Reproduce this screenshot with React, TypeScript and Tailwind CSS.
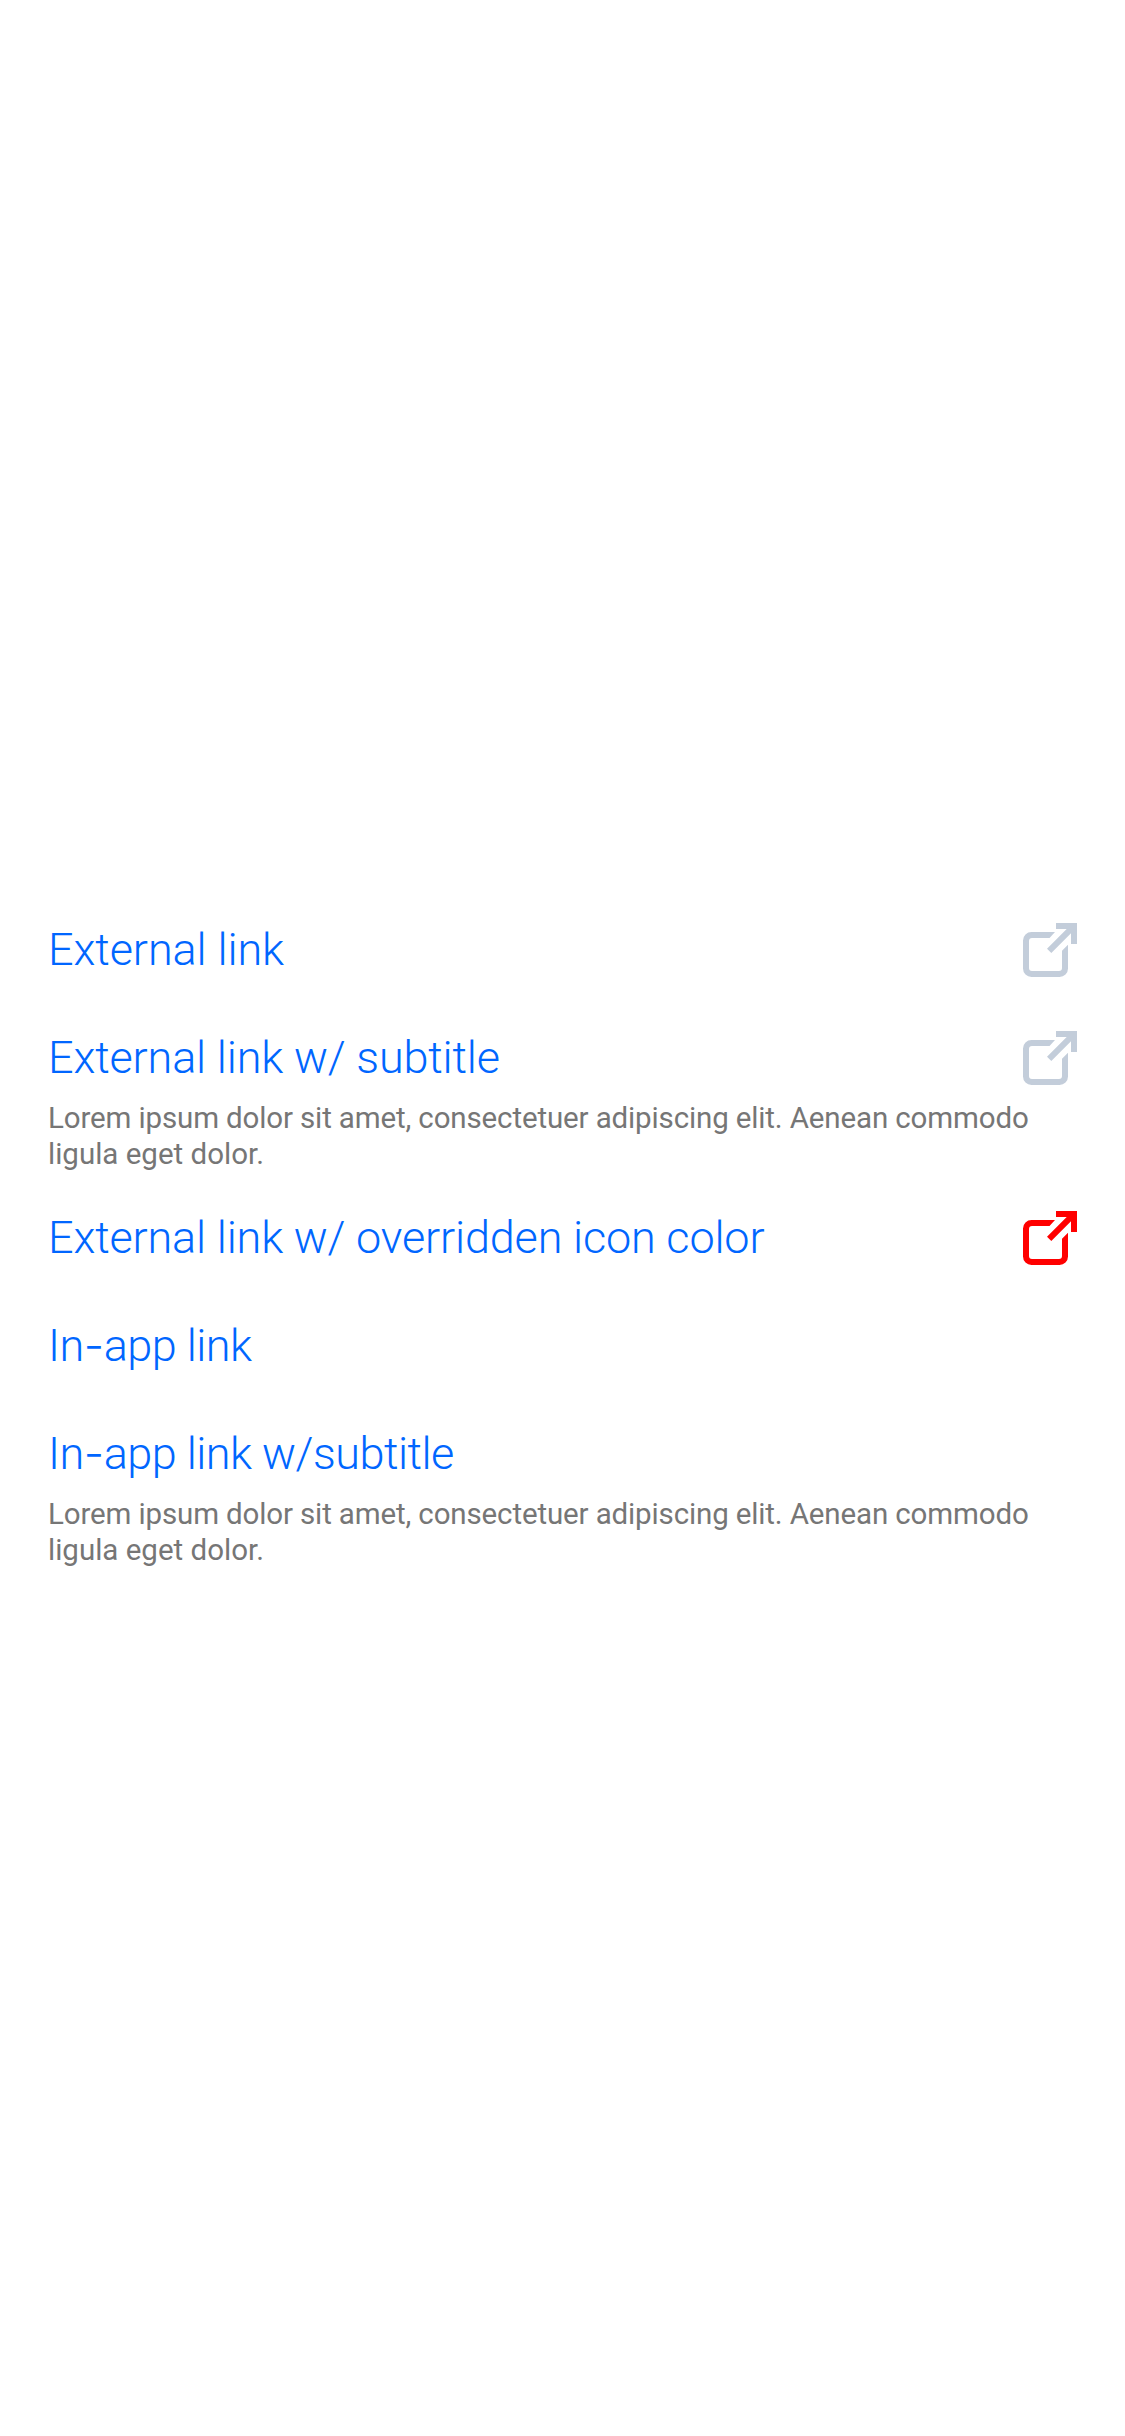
import type { ReactNode } from "react";

function ExternalIcon({ color }: { color: string }) {
  return (
    <svg className={`size-[54px] shrink-0 ${color}`} viewBox="0 0 54 54" fill="currentColor" aria-hidden="true">
      <path d="M32 9H8.5A8.500 8.500 0 0 0 0 17.500V45.500A8.500 8.500 0 0 0 8.500 54H36.500A8.500 8.500 0 0 0 45 45.500V21.800L39 27.800V45A3 3 0 0 1 36 48H9A3 3 0 0 1 6 45V18A3 3 0 0 1 9 15H26.500Z" />
      <path d="M33 0H54V21H48V10.300L28.300 30L24 25.700L43.700 6H33Z" />
    </svg>
  );
}

type LinkRowProps = {
  title: ReactNode;
  tracking: string;
  iconColor?: string;
  subtitle?: ReactNode;
};

function LinkRow({ title, tracking, iconColor, subtitle }: LinkRowProps) {
  return (
    <li className={subtitle ? "pt-6 pb-3" : "py-6"}>
      <div className="flex h-[60px] items-center justify-between">
        <a className={`text-[45px] leading-[60px] font-light whitespace-nowrap text-[#0066ff] ${tracking}`}>{title}</a>
        {iconColor && <ExternalIcon color={iconColor} />}
      </div>
      {subtitle && <p className="mt-3 text-[29.5px] leading-9 text-[#767676]">{subtitle}</p>}
    </li>
  );
}

const lorem = (
  <>
    <span className="tracking-[-0.135px]">Lorem ipsum dolor sit amet, consectetuer adipiscing elit. Aenean commodo</span>{" "}
    ligula eget dolor.
  </>
);

const hyphen = <span className="font-['Inter',sans-serif] leading-none">-</span>;

export default function App() {
  return (
    <main className="min-h-screen bg-white px-12 pt-[896px] font-['Roboto',sans-serif]">
      <ul>
        <LinkRow title="External link" tracking="tracking-[-0.1px]" iconColor="text-[#c3cdda]" />
        <LinkRow title="External link w/ subtitle" tracking="tracking-[-0.17px]" iconColor="text-[#c3cdda]" subtitle={lorem} />
        <LinkRow title="External link w/ overridden icon color" tracking="tracking-[-0.18px]" iconColor="text-[#ff0000]" />
        <LinkRow title={<>In{hyphen}app link</>} tracking="tracking-[-0.5px]" />
        <LinkRow title={<>In{hyphen}app link w/subtitle</>} tracking="tracking-[-0.5px]" subtitle={lorem} />
      </ul>
    </main>
  );
}
